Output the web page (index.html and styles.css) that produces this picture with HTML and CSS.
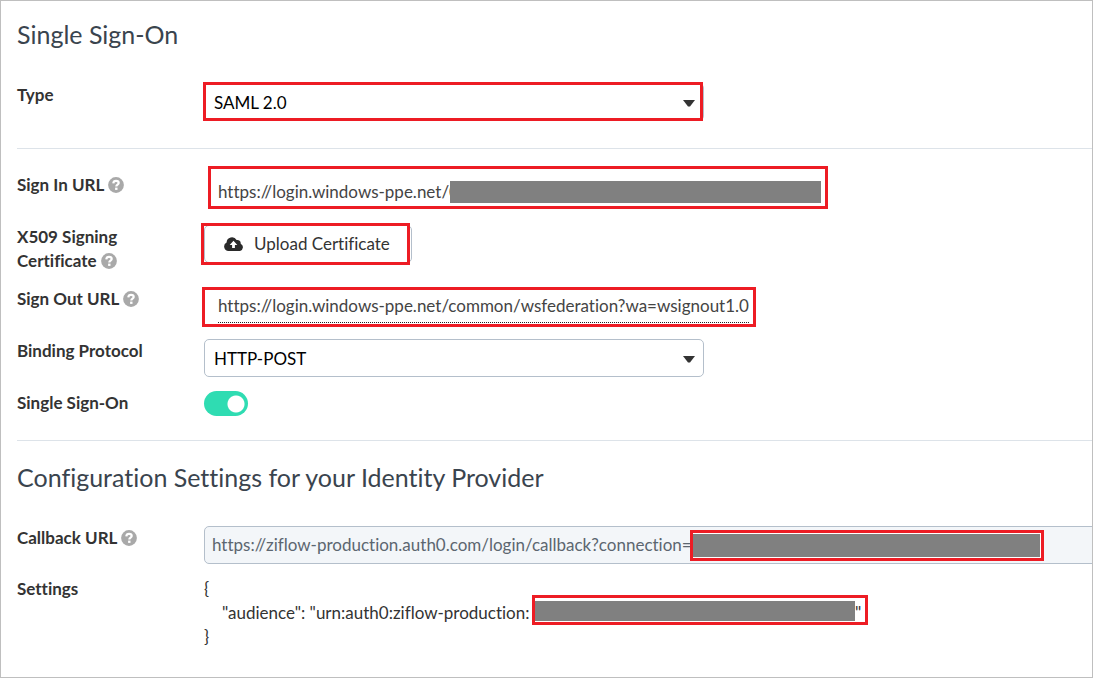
FILE: index.html
```html
<!DOCTYPE html>
<html lang="en">
<head>
<meta charset="utf-8">
<title>Single Sign-On</title>
<link rel="stylesheet" href="styles.css">
</head>
<body>
<svg class="defs" aria-hidden="true">
  <symbol id="help" viewBox="0 0 16 16">
    <circle cx="8" cy="8" r="7.9" fill="#a9a9a9"/>
    <path d="M5.300 6.300C5.500 4.400 6.600 3.900 8 3.900c1.600 0 2.700.9 2.700 2.200C10.700 7.700 8.300 7.700 8.300 9.500" fill="none" stroke="#fff" stroke-width="2.200"/>
    <rect x="7.100" y="10.600" width="2.400" height="2.300" fill="#fff"/>
  </symbol>
</svg>
<main class="page">
  <section class="section">
    <h1 class="title">Single Sign-On</h1>
    <div class="row">
      <label class="label" for="type">Type</label>
      <div class="control">
        <div class="select-box">
          <select id="type" class="select"><option>SAML 2.0</option></select>
          <svg class="caret" viewBox="0 0 12 7" aria-hidden="true"><path d="M0 0h12L7 6.500H5z" fill="#333"/></svg>
        </div>
        <span class="mark mark-type"></span>
      </div>
    </div>
  </section>

  <section class="section">
    <div class="rows">
      <div class="row">
        <div class="label">Sign In URL <svg class="help"><use href="#help"/></svg></div>
        <div class="control">
          <a class="url" href="#signin">https://login.windows-ppe.net/0</a>
          <span class="mark mark-signin"><span class="redact"></span></span>
        </div>
      </div>
      <div class="row">
        <div class="label">X509 Signing Certificate <svg class="help"><use href="#help"/></svg></div>
        <div class="control">
          <button class="upload" type="button">
            <svg class="cloud" viewBox="0 0 20 14" aria-hidden="true"><path d="M4.500 14A4.500 4.500 0 0 1 2.600 5.500 5.300 5.300 0 0 1 12.600 3.100 3.300 3.300 0 0 1 16.700 6.700 3.900 3.900 0 0 1 16 14z" fill="#2a2a2a"/><path d="M9.500 3.800 13.300 7.900H10.900V11H8.100V7.900H5.700z" fill="#fff"/></svg>
            Upload Certificate
          </button>
          <span class="mark mark-upload"></span>
        </div>
      </div>
      <div class="row">
        <div class="label">Sign Out URL <svg class="help"><use href="#help"/></svg></div>
        <div class="control">
          <a class="url url-dotted" href="#signout">https://login.windows-ppe.net/common/wsfederation?wa=wsignout1.0</a>
          <span class="mark mark-signout"></span>
        </div>
      </div>
      <div class="row">
        <label class="label" for="binding">Binding Protocol</label>
        <div class="control">
          <div class="select-box">
            <select id="binding" class="select"><option>HTTP-POST</option></select>
            <svg class="caret" viewBox="0 0 12 7" aria-hidden="true"><path d="M0 0h12L7 6.500H5z" fill="#333"/></svg>
          </div>
        </div>
      </div>
      <div class="row">
        <label class="label" for="sso">Single Sign-On</label>
        <div class="control"><input id="sso" class="toggle" type="checkbox" checked></div>
      </div>
    </div>
  </section>

  <section class="section">
    <h2 class="title">Configuration Settings for your Identity Provider</h2>
    <div class="rows">
      <div class="row">
        <label class="label" for="callback">Callback URL <svg class="help"><use href="#help"/></svg></label>
        <div class="control">
          <input id="callback" class="callback" type="text" readonly value="https://ziflow-production.auth0.com/login/callback?connection=">
          <span class="mark mark-callback"><span class="redact"></span></span>
        </div>
      </div>
      <div class="row">
        <div class="label">Settings</div>
        <div class="control settings">
          <div>{</div>
          <div class="entry">"audience": "urn:auth0:ziflow-production:</div>
          <div>}</div>
          <span class="mark mark-audience"><span class="redact"></span>"</span>
        </div>
      </div>
    </div>
  </section>
</main>
</body>
</html>
```

FILE: styles.css
```css
* { box-sizing: border-box; }

body {
  margin: 0;
  background: #fff;
  color: #333;
  font: 17px/24px Lato, "Open Sans", sans-serif;
  font-variant-ligatures: none;
}

.defs { display: none; }

.page {
  min-height: 100vh;
  padding-left: 16px;
  border: 1px solid #bfbfbf;
  overflow: hidden;
}

.section { padding: 24px 0 11px; }
.section + .section { border-top: 1px solid #dde3e9; }
.section:first-child { padding: 17px 0 27px; }
.section:last-child { padding: 20px 0 0; }

.title {
  margin: 0 0 33px;
  color: #3a444e;
  font-size: 25px;
  font-weight: 400;
  line-height: 32px;
}

.rows { display: flex; flex-direction: column; gap: 14px; }
.section:last-child .rows { gap: 13px; }

.row {
  display: grid;
  grid-template-columns: 187px 1fr;
  min-height: 38px;
}

.label { padding-right: 50px; font-size: 17px; font-weight: 700; }

.help { width: 16px; height: 16px; vertical-align: -2px; }

.control { position: relative; min-width: 0; }

.select-box { position: relative; max-width: 500px; }

.select {
  display: block;
  width: 100%;
  height: 38px;
  padding: 1px 9px 0;
  border: 1px solid #b4bfcb;
  border-radius: 5px;
  appearance: none;
  background: #fff;
  color: #000;
  font: inherit;
}

.caret {
  position: absolute;
  top: 17px;
  right: 9px;
  width: 12px;
  height: 7px;
  pointer-events: none;
}

.url {
  display: inline-block;
  margin: 7px 0 0 14px;
  color: #444;
  text-decoration: none;
  white-space: nowrap;
}

.url-dotted { padding-bottom: 4px; border-bottom: 1px dotted #222; }

.upload {
  display: flex;
  align-items: center;
  gap: 10px;
  height: 38px;
  padding: 0 21px 0 19px;
  border: 1px solid #b4bfcb;
  border-radius: 5px;
  background: #fff;
  color: #333;
  font: inherit;
}

.cloud { width: 20px; height: 14px; }

.toggle {
  display: block;
  width: 44px;
  height: 25px;
  margin: 0;
  border-radius: 13px;
  appearance: none;
  background: radial-gradient(circle at 32px 13px, #fff 8px, #2fdcb2 9px);
}

.callback {
  display: block;
  width: calc(100% + 8px);
  height: 38px;
  padding: 0 7px 2px;
  border: 1px solid #b4bfcb;
  border-radius: 5px;
  background: #f3f6f9;
  color: #5c6670;
  font: inherit;
}

.settings { padding-bottom: 16px; }
.entry { padding-left: 18px; }

/* Callout frames drawn over the controls */
.mark {
  position: absolute;
  display: flex;
  border: 3px solid #ed1c24;
  pointer-events: none;
}

.redact { flex: none; background: #808080; }

.mark-type { top: -1px; left: -1px; width: 500px; height: 39px; }

.mark-signin { top: -7px; left: 4px; width: 620px; height: 43px; padding: 12px 0 3px 239px; }
.mark-signin .redact { width: 371px; }

.mark-upload { top: -2px; left: -3px; width: 209px; height: 42px; }

.mark-signout { top: 0; left: -2px; width: 554px; height: 40px; }

.mark-callback { top: 4px; left: 486px; width: 354px; height: 31px; padding: 1px 0; background: #fff; }
.mark-callback .redact { width: 347px; }

.mark-audience { top: 18px; left: 328px; width: 336px; height: 30px; padding: 3px 0; background: #fff; }
.mark-audience .redact { width: 320px; height: 20px; }
```
